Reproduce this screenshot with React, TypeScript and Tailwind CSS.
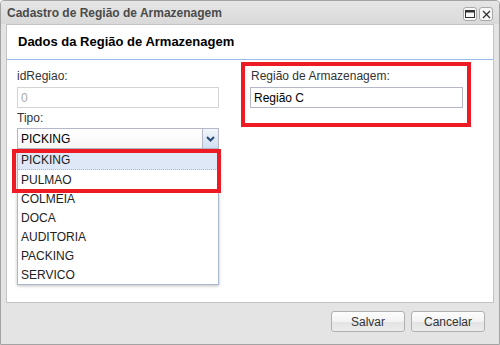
const tipos = ['PICKING', 'PULMAO', 'COLMEIA', 'DOCA', 'AUDITORIA', 'PACKING', 'SERVICO']

function ToolButton({ kind }: { kind: 'max' | 'close' }) {
	return (
		<div className="w-[14px] h-[14px] rounded-[3px] border border-[#a8a8a8] bg-[#f7f7f7] flex items-center justify-center">
			{kind === 'max' ? (
				<svg width="10" height="8" viewBox="0 0 10 8">
					<rect x="0.5" y="0.5" width="9" height="7" fill="none" stroke="#333" />
					<rect x="0.5" y="0.5" width="9" height="2" fill="#333" />
				</svg>
			) : (
				<svg width="9" height="9" viewBox="0 0 9 9">
					<path d="M1 1L8 8M8 1L1 8" stroke="#333" strokeWidth="1.3" />
				</svg>
			)}
		</div>
	)
}

function FooterButton({ label }: { label: string }) {
	return (
		<button className="h-[21px] w-[74px] rounded-[3px] border border-[#b0b0b0] bg-[linear-gradient(#fdfdfd_0%,#f3f3f3_50%,#e3e3e3_51%,#ececec_100%)] text-[12px] text-[#333] leading-none">
			{label}
		</button>
	)
}

export default function App() {
	return (
		<div className="w-[500px] h-[345px] bg-[#e4e4e4] border border-[#a3a3a3] rounded-t-[4px] flex flex-col font-['Liberation_Sans',Arial,sans-serif] text-[12px] text-[#333] overflow-hidden">
			<div className="h-[23px] shrink-0 flex items-center justify-between pl-[6px] pr-[6px] bg-[linear-gradient(#e6e6e6,#d9d9d9)]">
				<span className="font-bold text-[12px] text-[#4b4b4b]">Cadastro de Região de Armazenagem</span>
				<div className="flex gap-[2px] mt-[3px]">
					<ToolButton kind="max" />
					<ToolButton kind="close" />
				</div>
			</div>
			<div className="mx-[5px] h-[279px] shrink-0 bg-white border border-[#c4c4c4] relative">
				<div className="h-[35px] border-b border-[#99bbe8] flex items-center pl-[11px]">
					<h2 className="font-bold text-[13px] text-black">Dados da Região de Armazenagem</h2>
				</div>
				<div className="flex items-start pl-[10px] pt-[2px] gap-[22px]">
					<div className="w-[202px] mt-[7px] relative">
						<label className="block h-[14px] leading-[14px] text-[#333]">idRegiao:</label>
						<div className="mt-[4px] h-[21px] border border-[#d4d4d4] flex items-center px-[3px] text-[#aaa]">0</div>
						<label className="block mt-[3px] h-[14px] leading-[14px] text-[#333]">Tipo:</label>
						<div className="mt-[3px] h-[21px] border border-[#b5b8c8] flex">
							<div className="flex-1 flex items-center px-[3px] text-black bg-[linear-gradient(#ffffff,#f6f6f6)]">PICKING</div>
							<div className="w-[16px] border-l border-[#b5b8c8] bg-[linear-gradient(#f2f6fb,#cfdff2)] flex items-center justify-center">
								<svg width="9" height="6" viewBox="0 0 9 6">
									<path d="M1 1L4.5 4.5L8 1" fill="none" stroke="#2a4a78" strokeWidth="2" />
								</svg>
							</div>
						</div>
						<ul className="absolute left-0 top-[81px] w-[202px] bg-white border border-[#a9b8cf] shadow-[0_1px_3px_rgba(0,0,0,0.25)]">
							{tipos.map((t, i) => (
								<li
									key={t}
									className={
										i === 0
											? 'h-[19px] flex items-center px-[3px] bg-[#dfe8f6] border-b border-dotted border-[#a3bae9] text-[#222]'
											: 'h-[19px] flex items-center px-[3px] text-[#222]'
									}
								>
									{t}
								</li>
							))}
						</ul>
						<div className="absolute left-[-5px] top-[80px] w-[209px] h-[44px] border-4 border-[#ed1c24]" />
					</div>
					<div className="w-[230px] h-[65px] border-4 border-[#ed1c24] pl-[5px] pr-[4px] pt-[3px]">
						<label className="block h-[14px] leading-[14px] pl-[1px] text-[#333]">Região de Armazenagem:</label>
						<div className="mt-[4px] h-[21px] border border-[#b5b8c8] flex items-center px-[3px] text-black">Região C</div>
					</div>
				</div>
			</div>
			<div className="flex-1 flex justify-end items-start pt-[8px] pr-[14px] gap-[6px]">
				<FooterButton label="Salvar" />
				<FooterButton label="Cancelar" />
			</div>
		</div>
	)
}
